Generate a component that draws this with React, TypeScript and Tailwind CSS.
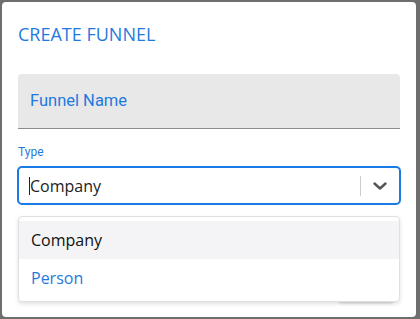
import React from "react";

export default function App() {
  return (
    <div
      className="w-[420px] h-[319px] bg-[#6e6e6e] pl-[2px] pr-[4px] pt-[2px] overflow-hidden"
      style={{ fontFamily: '"Open Sans", "Noto Sans", sans-serif' }}
    >
      <div className="relative h-[315px] bg-white rounded-[4px] px-[16px]">
        <div className="pt-[20px] text-[18px] leading-[24px] text-[#1f7ae0]">
          CREATE FUNNEL
        </div>
        <div className="mt-[28px] h-[55px] bg-[#e8e8e8] rounded-t-[4px] border-b border-[#8c8c8c] flex items-center px-[12px]">
          <span className="text-[16.5px] text-[#1f7ae0] font-['Roboto',sans-serif]">Funnel Name</span>
        </div>
        <div className="mt-[15px] text-[12px] leading-[16px] text-[#1f7ae0] font-['Roboto',sans-serif]">Type</div>
        <div className="mt-[6px] h-[39px] -mx-[1px] border-2 border-[#1a7ae6] rounded-[5px] flex items-center">
          <div className="flex-1 pl-[10px] flex items-center">
            <span className="w-[1px] h-[18px] bg-[#222]"></span>
            <span className="text-[16px] text-[#222]">Company</span>
          </div>
          <div className="w-px h-[20px] bg-[#cccccc]"></div>
          <div className="w-[38px] flex items-center justify-center">
            <svg width="16" height="16" viewBox="0 0 16 16">
              <path d="M2.5 5.5 L8 10.5 L13.5 5.5" fill="none" stroke="#555" strokeWidth="2.4" strokeLinecap="round" strokeLinejoin="round" />
            </svg>
          </div>
        </div>
        <div className="absolute left-[16px] right-[16px] top-[214px] bg-white rounded-[4px] border border-[#e0e0e0] shadow-[0_2px_4px_rgba(0,0,0,0.12)] py-[4px] z-10">
          <div className="h-[38px] bg-[#f4f4f6] flex items-center px-[12px] text-[16px] text-[#111]">Company</div>
          <div className="h-[38px] flex items-center px-[12px] text-[16px] text-[#1f7ae0]">Person</div>
        </div>
        <div className="absolute right-[22px] top-[288px] w-[56px] h-[12px] rounded-[4px] bg-[#f0f0f0] shadow-[0_1px_3px_rgba(0,0,0,0.2)]"></div>
      </div>
    </div>
  );
}
